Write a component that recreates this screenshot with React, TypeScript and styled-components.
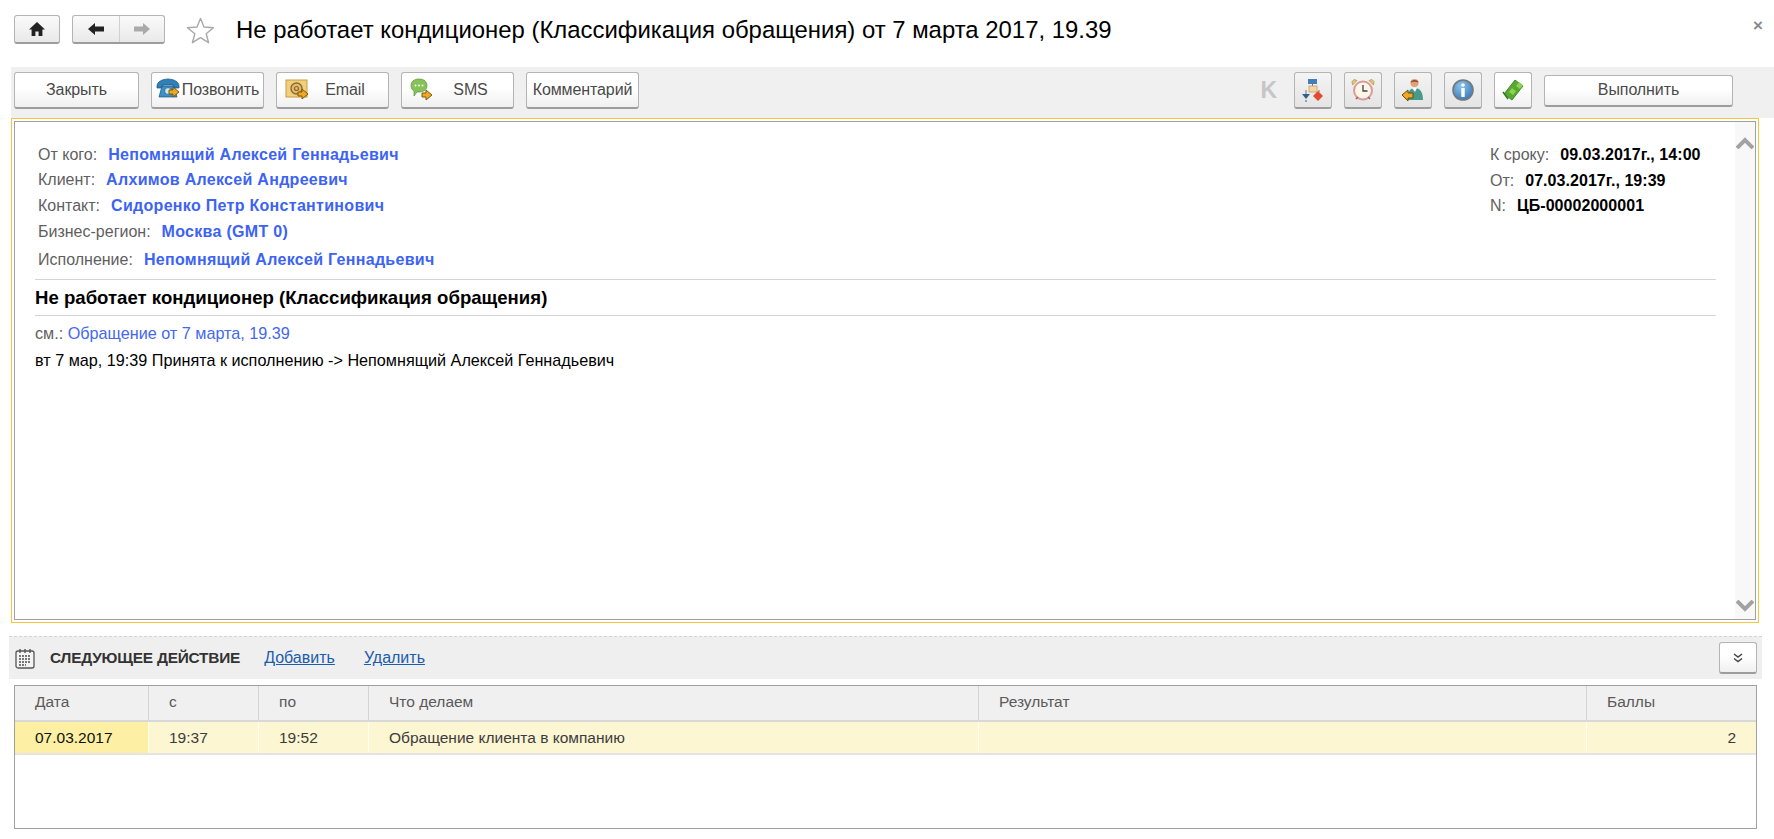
import React from "react";
import styled, { createGlobalStyle, css } from "styled-components";

const Global = createGlobalStyle`
  html, body { margin: 0; padding: 0; background: #fff; }
  * { box-sizing: border-box; }
  body { font-family: "Liberation Sans", Arial, sans-serif; color: #333; }
`;

const Page = styled.div`
  width: 1774px;
  height: 839px;
  overflow: hidden;
  background: #fff;
  display: flex;
  flex-direction: column;
  position: relative;
`;

const Header = styled.header`
  height: 67px;
  display: flex;
  align-items: center;
  padding: 0 0 8px 14px;
`;

const buttonSkin = css`
  background: linear-gradient(#fff 0%, #fff 45%, #f0f0f0 100%);
  border: 1px solid #b4b4b4;
  border-bottom: 2px solid #9d9d9d;
  border-radius: 3px;
`;

const NavButton = styled.div<{ $w: number }>`
  ${buttonSkin}
  width: ${(p) => p.$w}px;
  height: 29px;
  display: flex;
  align-items: center;
  justify-content: center;
  background: linear-gradient(#fafafa, #e9e9e9);
`;

const NavGroup = styled.div`
  ${buttonSkin}
  background: linear-gradient(#fafafa, #e9e9e9);
  width: 93px;
  height: 29px;
  margin-left: 12px;
  display: grid;
  grid-template-columns: 47px 1fr;
  align-items: center;
  justify-items: center;
  & > span:first-child { border-right: 1px solid #d0d0d0; }
`;

const NavCell = styled.span`
  width: 100%;
  height: 100%;
  display: flex;
  align-items: center;
  justify-content: center;
`;

const StarIcon = styled.svg`
  margin-left: 21px;
  margin-top: 1px;
`;

const Title = styled.h1`
  margin: 0 0 0 21px;
  font-size: 23.9px;
  font-weight: 400;
  color: #000;
  white-space: nowrap;
`;

const CloseMark = styled.span`
  position: absolute;
  right: 11px;
  top: 16px;
  font-size: 17px;
  line-height: 20px;
  font-weight: 700;
  color: #8a8a8a;
`;

const Toolbar = styled.div`
  height: 51px;
  margin: 0 0 0 11px;
  background: #f0f0f0;
  display: flex;
  align-items: center;
  padding: 0 0 4px 3px;
`;

const ToolButton = styled.button<{ $w: number; $ml?: number }>`
  ${buttonSkin}
  width: ${(p) => p.$w}px;
  height: 37px;
  margin-left: ${(p) => p.$ml ?? 0}px;
  padding: 0 0 1px;
  display: flex;
  align-items: center;
  justify-content: center;
  gap: 1px;
  font: 16px "Liberation Sans", Arial, sans-serif;
  letter-spacing: -0.1px;
  color: #4a4a4a;
  white-space: nowrap;
`;

const SpacedButton = styled(ToolButton)`
  justify-content: flex-start;
  padding-left: 8px;
  & > span { flex: 1; text-align: center; padding-right: 10px; }
`;

const Spacer = styled.div`
  flex: 1;
`;

const GhostK = styled.span`
  font: 700 23px "Liberation Sans", Arial, sans-serif;
  color: #c6c6c6;
  margin-right: 17px;
`;

const IconButton = styled.div<{ $light?: boolean }>`
  ${buttonSkin}
  width: 38px;
  height: 37px;
  margin-right: 12px;
  display: flex;
  align-items: center;
  justify-content: center;
  ${(p) => !p.$light && "background: linear-gradient(#f4f4f4, #e4e4e4);"}
`;

const RunButton = styled(ToolButton)`
  height: 32px;
  margin: 0 41px 0 0;
`;

const DocFrame = styled.section`
  height: 505px;
  margin: 0 15px 0 11px;
  border: 1px solid #f5c63c;
  padding: 2px;
`;

const DocInner = styled.div`
  height: 100%;
  border: 1px solid #a0a0a0;
  display: flex;
`;

const DocBody = styled.div`
  flex: 1;
  min-width: 0;
  padding: 23px 19px 0 20px;
`;

const ScrollStrip = styled.div`
  width: 20px;
  background: #f8f8f8;
  display: flex;
  flex-direction: column;
  justify-content: space-between;
  align-items: center;
  padding: 15px 0 7px;
`;

const MetaBlock = styled.div`
  display: flex;
  justify-content: space-between;
  height: 134px;
`;

const MetaLeft = styled.div`
  padding-left: 3px;
`;

const MetaRight = styled.div`
  width: 226px;
`;

const MetaRow = styled.div<{ $h: number }>`
  height: ${(p) => p.$h}px;
  font-size: 16px;
  line-height: 20px;
  white-space: nowrap;
`;

const Label = styled.span`
  color: #5f5f5f;
  margin-right: 11px;
`;

const PersonLink = styled.span`
  color: #3d63f5;
  font-weight: 700;
  letter-spacing: 0.3px;
`;

const Strong = styled.span`
  color: #000;
  font-weight: 700;
  letter-spacing: 0.05px;
`;

const Divider = styled.hr`
  margin: 0;
  border: 0;
  border-top: 1px solid #d4d4d4;
`;

const Subject = styled.div`
  font-size: 18.6px;
  font-weight: 700;
  line-height: 35px;
  color: #000;
`;

const SeeAlso = styled.div`
  margin-top: 7px;
  font-size: 16.2px;
  line-height: 20px;
  color: #5f5f5f;
`;

const SeeLink = styled.span`
  color: #4468ee;
`;

const LogLine = styled.div`
  margin-top: 7px;
  font-size: 16.2px;
  line-height: 20px;
  color: #000;
`;

const SectionBar = styled.div`
  height: 43px;
  margin: 13px 12px 0 9px;
  background: #efefef;
  border-top: 1px dashed #d4d4d4;
  display: flex;
  align-items: center;
  padding: 0 5px 0 6px;
`;

const SectionTitle = styled.span`
  margin-left: 15px;
  font-size: 15.4px;
  font-weight: 700;
  letter-spacing: -0.2px;
  color: #333;
`;

const SectionLink = styled.a`
  margin-left: 24px;
  font-size: 16px;
  color: #1b5cab;
  text-decoration: underline;
  & + & { margin-left: 29px; }
`;

const CollapseButton = styled.div`
  ${buttonSkin}
  width: 38px;
  height: 32px;
  display: flex;
  align-items: center;
  justify-content: center;
`;

const Table = styled.div`
  height: 144px;
  margin: 6px 17px 0 14px;
  border: 1px solid #a0a0a0;
`;

const Grid = "134px 110px 110px 610px 608px 1fr";

const HeadRow = styled.div`
  display: grid;
  grid-template-columns: ${Grid};
  height: 36px;
  border-bottom: 2px solid #d8d8d8;
  background: #f0f0f0;
`;

const HeadCell = styled.div`
  padding: 0 0 2px 20px;
  display: flex;
  align-items: center;
  font-size: 15.5px;
  color: #5a5a5a;
  border-right: 1px solid #d4d4d4;
  &:last-child { border-right: 0; }
`;

const DataRow = styled.div`
  display: grid;
  grid-template-columns: ${Grid};
  height: 33px;
  background: #fdf6d2;
  border-bottom: 2px solid #e4e4e4;
`;

const DataCell = styled.div<{ $active?: boolean; $right?: boolean }>`
  padding: ${(p) => (p.$right ? "0 20px 0 0" : "0 0 0 20px")};
  display: flex;
  align-items: center;
  justify-content: ${(p) => (p.$right ? "flex-end" : "flex-start")};
  font-size: 15.5px;
  color: ${(p) => (p.$active ? "#111" : "#3c3c3c")};
  background: ${(p) => (p.$active ? "#fdf0a4" : "transparent")};
  border-right: 1px solid #fffdf0;
  &:last-child { border-right: 0; }
`;

const Orange = () => (
  <path d="M13 13h4v-3l6 5-6 5v-3h-4z" fill="#f0a823" stroke="#7a5a12" strokeWidth="1" />
);

const Home = () => (
  <svg width="18" height="16" viewBox="0 0 18 16">
    <path d="M9 1 1 8.500h2.600V15h3.800v-4.600h3.200V15h3.800V8.500H17z" fill="#222" />
  </svg>
);
const Arrow = ({ color, flip }: { color: string; flip?: boolean }) => (
  <svg width="18" height="14" viewBox="0 0 18 14" style={flip ? { transform: "scaleX(-1)" } : undefined}>
    <path d="M1 7 8 1v3.600h9v4.800H8V13z" fill={color} />
  </svg>
);
const Star = () => (
  <StarIcon width="29" height="29" viewBox="0 0 29 29">
    <path d="M14.500 2.500 18 11l9.500.7-7.300 6 2.400 9-8.100-5-8.100 5 2.400-9-7.300-6L11 11z" fill="#fff" stroke="#a8a8a8" strokeWidth="1.400" strokeLinejoin="round" />
  </StarIcon>
);
const Phone = () => (
  <svg width="25" height="25" viewBox="0 0 25 25">
    <path d="M1 9c0-4 5-7 11-7s11 3 11 7v2h-6V8H7v3H1z" fill="#2f7fb8" stroke="#17557f" strokeWidth=".7" />
    <path d="M6 9h12l3 11H3z" fill="#3d8fc6" stroke="#17557f" strokeWidth=".7" />
    <circle cx="12" cy="14" r="3.400" fill="#cfe5f2" stroke="#17557f" strokeWidth=".7" />
    <Orange />
  </svg>
);
const Mail = () => (
  <svg width="26" height="24" viewBox="0 0 26 24">
    <rect x="1" y="2" width="21" height="17" fill="#f1cf7c" stroke="#c79a3c" />
    <circle cx="11.500" cy="10.500" r="5.500" fill="#e4b96a" stroke="#8a6a35" strokeWidth="1.400" />
    <circle cx="11.500" cy="10.500" r="2" fill="none" stroke="#8a6a35" strokeWidth="1.200" />
    <g transform="translate(0 1)"><Orange /></g>
  </svg>
);
const Sms = () => (
  <svg width="27" height="25" viewBox="0 0 27 25">
    <path d="M9 2c5 0 8 2.500 8 6.500S14 15 9 15H7l-3 4v-5C2 13 1 11 1 8.500 1 4.500 4 2 9 2z" fill="#86c25a" stroke="#5d9a3a" strokeWidth=".7" />
    <circle cx="5.500" cy="8.500" r="1" fill="#fff" />
    <circle cx="9" cy="8.500" r="1" fill="#fff" />
    <circle cx="12.500" cy="8.500" r="1" fill="#fff" />
    <g transform="translate(-1 3)"><Orange /></g>
  </svg>
);
const Flow = () => (
  <svg width="22" height="24" viewBox="0 0 22 24">
    <rect x="6" y="1" width="9" height="5" fill="#3f7fc0" />
    <path d="M10.500 6v3M4 12v4M17 12v2" stroke="#777" fill="none" />
    <rect x="7" y="8" width="8" height="6" fill="#f5d6a8" stroke="#c49455" strokeWidth=".7" />
    <path d="M0 16h8l-4 5z" fill="#2f5f92" />
    <path d="M16 13l5 5-5 5-5-5z" fill="#e2492d" />
    <path d="M3 23h2" stroke="#2f5f92" />
  </svg>
);
const Clock = () => (
  <svg width="24" height="24" viewBox="0 0 24 24">
    <path d="M1.500 7 6 2.500 3 1.500 1 3.500zM22.500 7 18 2.500 21 1.500 23 3.500z" fill="#e3c77d" stroke="#a98d45" strokeWidth=".7" />
    <circle cx="12" cy="12.500" r="9" fill="#fbf6e8" stroke="#dd9a9a" strokeWidth="2" />
    <path d="M12 7v6h4.500" fill="none" stroke="#444" strokeWidth="1.300" />
    <path d="M5 21l2-2M19 21l-2-2" stroke="#b35a5a" strokeWidth="1.500" />
  </svg>
);
const Person = () => (
  <svg width="24" height="24" viewBox="0 0 24 24">
    <circle cx="13.500" cy="5" r="4" fill="#e0a07a" />
    <path d="M9.500 4.500c.5-3 7-3.500 8 0-2-1-6-1-8 0z" fill="#8a4a2a" />
    <path d="M6 22c0-8 3-12 8-12s8 4 8 12z" fill="#4a9a8c" />
    <path d="M11 10l3 4 2-4z" fill="#fff" />
    <path d="M1 17l6-5v3h5v5H7v3z" fill="#f0a823" stroke="#6a4c10" strokeWidth="1" />
  </svg>
);
const Info = () => (
  <svg width="24" height="24" viewBox="0 0 24 24">
    <defs>
      <radialGradient id="inf" cx=".4" cy=".3" r=".8">
        <stop offset="0" stopColor="#8cc4ee" />
        <stop offset="1" stopColor="#2f73b2" />
      </radialGradient>
    </defs>
    <circle cx="12" cy="12" r="10" fill="url(#inf)" stroke="#777" strokeWidth="1.600" />
    <circle cx="12" cy="7" r="1.800" fill="#fff" />
    <rect x="10.300" y="10" width="3.400" height="9" rx=".6" fill="#fff" />
  </svg>
);
const Tickets = () => (
  <svg width="24" height="24" viewBox="0 0 24 24">
    <path d="M14 2 22 8 11 22 3 16z" fill="#58a92e" stroke="#2f7a1c" strokeWidth=".8" />
    <path d="M18 4 22 7 19 11 15 8zM11 10l4 3-3 4-4-3z" fill="#8ed05a" />
    <path d="M2 14l5 7" stroke="#2f7a1c" strokeWidth="1.500" />
  </svg>
);
const Calendar = () => (
  <svg width="20" height="21" viewBox="0 0 20 21">
    <rect x="1" y="3" width="18" height="17" rx="2" fill="#f4f4f4" stroke="#555" strokeWidth="1.300" />
    <path d="M5 1v4M10 1v4M15 1v4" stroke="#555" strokeWidth="1.400" />
    <path d="M4 8h12M4 11h12M4 14h12M4 17h7" stroke="#777" strokeWidth="1.800" strokeDasharray="2 1" />
  </svg>
);
const Chevron = ({ up }: { up?: boolean }) => (
  <svg width="18" height="12" viewBox="0 0 18 12">
    <path d={up ? "M1 11 9 3l8 8" : "M1 1l8 8 8-8"} fill="none" stroke="#a2a2a2" strokeWidth="4" />
  </svg>
);
const DoubleDown = () => (
  <svg width="10" height="10" viewBox="0 0 10 10">
    <path d="M1 1l4 3 4-3M1 5.500l4 3 4-3" fill="none" stroke="#444" strokeWidth="1.500" />
  </svg>
);

const people = [
  { label: "От кого:", value: "Непомнящий Алексей Геннадьевич", h: 25 },
  { label: "Клиент:", value: "Алхимов Алексей Андреевич", h: 26 },
  { label: "Контакт:", value: "Сидоренко Петр Константинович", h: 26 },
  { label: "Бизнес-регион:", value: "Москва (GMT 0)", h: 28 },
  { label: "Исполнение:", value: "Непомнящий Алексей Геннадьевич", h: 18 },
];

const facts = [
  { label: "К сроку:", value: "09.03.2017г., 14:00" },
  { label: "От:", value: "07.03.2017г., 19:39" },
  { label: "N:", value: "ЦБ-00002000001" },
];

export default function App() {
  return (
    <Page>
      <Global />
      <Header>
        <NavButton $w={46}><Home /></NavButton>
        <NavGroup>
          <NavCell><Arrow color="#222" /></NavCell>
          <NavCell><Arrow color="#aaa" flip /></NavCell>
        </NavGroup>
        <Star />
        <Title>Не работает кондиционер (Классификация обращения) от 7 марта 2017, 19.39</Title>
      </Header>
      <CloseMark>×</CloseMark>

      <Toolbar>
        <ToolButton $w={125}>Закрыть</ToolButton>
        <ToolButton $w={113} $ml={12}><Phone />Позвонить</ToolButton>
        <SpacedButton $w={113} $ml={12}><Mail /><span>Email</span></SpacedButton>
        <SpacedButton $w={113} $ml={12}><Sms /><span>SMS</span></SpacedButton>
        <ToolButton $w={113} $ml={12}>Комментарий</ToolButton>
        <Spacer />
        <GhostK>K</GhostK>
        <IconButton><Flow /></IconButton>
        <IconButton><Clock /></IconButton>
        <IconButton><Person /></IconButton>
        <IconButton><Info /></IconButton>
        <IconButton $light><Tickets /></IconButton>
        <RunButton $w={189}>Выполнить</RunButton>
      </Toolbar>

      <DocFrame>
        <DocInner>
          <DocBody>
            <MetaBlock>
              <MetaLeft>
                {people.map((p) => (
                  <MetaRow key={p.label} $h={p.h}>
                    <Label>{p.label}</Label>
                    <PersonLink>{p.value}</PersonLink>
                  </MetaRow>
                ))}
              </MetaLeft>
              <MetaRight>
                {facts.map((f) => (
                  <MetaRow key={f.label} $h={25.5}>
                    <Label>{f.label}</Label>
                    <Strong>{f.value}</Strong>
                  </MetaRow>
                ))}
              </MetaRight>
            </MetaBlock>
            <Divider />
            <Subject>Не работает кондиционер (Классификация обращения)</Subject>
            <Divider />
            <SeeAlso>см.: <SeeLink>Обращение от 7 марта, 19.39</SeeLink></SeeAlso>
            <LogLine>вт 7 мар, 19:39 Принята к исполнению -&gt; Непомнящий Алексей Геннадьевич</LogLine>
          </DocBody>
          <ScrollStrip>
            <Chevron up />
            <Chevron />
          </ScrollStrip>
        </DocInner>
      </DocFrame>

      <SectionBar>
        <Calendar />
        <SectionTitle>СЛЕДУЮЩЕЕ ДЕЙСТВИЕ</SectionTitle>
        <SectionLink>Добавить</SectionLink>
        <SectionLink>Удалить</SectionLink>
        <Spacer />
        <CollapseButton><DoubleDown /></CollapseButton>
      </SectionBar>

      <Table>
        <HeadRow>
          <HeadCell>Дата</HeadCell>
          <HeadCell>с</HeadCell>
          <HeadCell>по</HeadCell>
          <HeadCell>Что делаем</HeadCell>
          <HeadCell>Результат</HeadCell>
          <HeadCell>Баллы</HeadCell>
        </HeadRow>
        <DataRow>
          <DataCell $active>07.03.2017</DataCell>
          <DataCell>19:37</DataCell>
          <DataCell>19:52</DataCell>
          <DataCell>Обращение клиента в компанию</DataCell>
          <DataCell />
          <DataCell $right>2</DataCell>
        </DataRow>
      </Table>
    </Page>
  );
}
